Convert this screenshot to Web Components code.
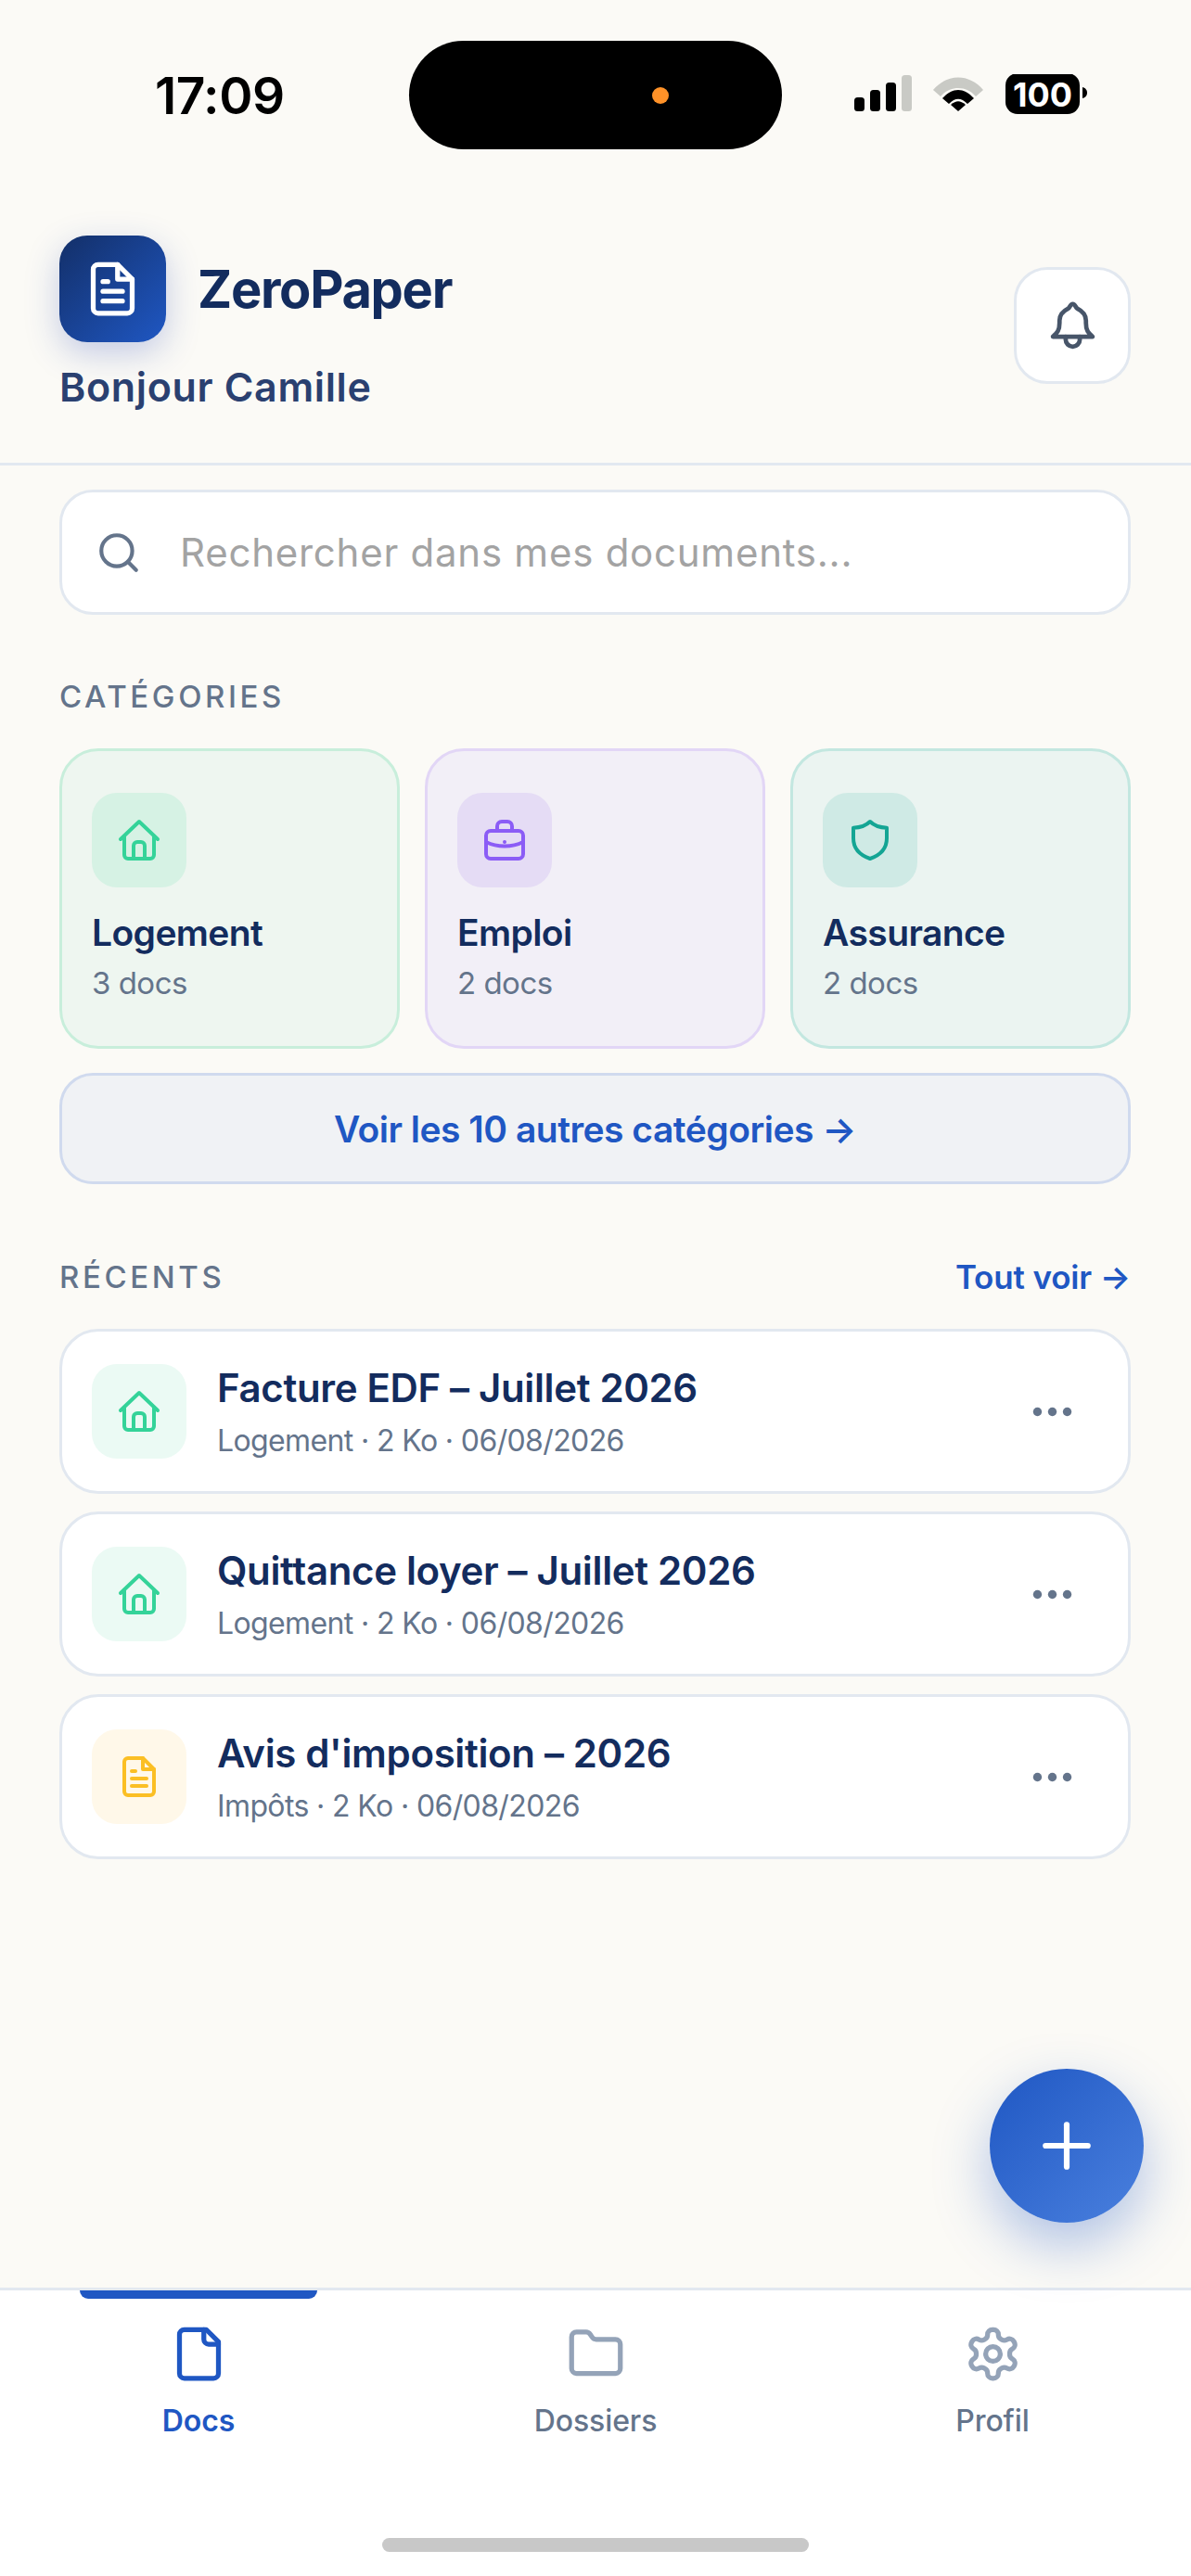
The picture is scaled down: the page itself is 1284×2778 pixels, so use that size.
<!DOCTYPE html>
<html lang="fr">
<head>
<meta charset="utf-8">
<title>ZeroPaper</title>
<style>
  html, body { margin: 0; padding: 0; background: #fbfaf6; }
  body { font-family: Inter, "Liberation Sans", sans-serif; }
</style>
</head>
<body>
<zp-app>
  <zp-status-bar slot="status" time="17:09" battery="100"></zp-status-bar>
  <zp-header slot="header" title="ZeroPaper" greeting="Bonjour Camille"></zp-header>
  <zp-search placeholder="Rechercher dans mes documents..."></zp-search>
  <zp-section label="CATÉGORIES" style="margin-top:68px;margin-bottom:36px"></zp-section>
  <zp-category-grid>
    <zp-category name="Logement" count="3 docs" icon="home" tone="green"></zp-category>
    <zp-category name="Emploi" count="2 docs" icon="briefcase" tone="purple"></zp-category>
    <zp-category name="Assurance" count="2 docs" icon="shield" tone="teal"></zp-category>
  </zp-category-grid>
  <zp-more-button label="Voir les 10 autres catégories →"></zp-more-button>
  <zp-section label="RÉCENTS" action="Tout voir →" style="margin-top:80px;margin-bottom:36px"></zp-section>
  <zp-doc-list>
    <zp-doc title="Facture EDF – Juillet 2026" meta="Logement · 2 Ko · 06/08/2026" icon="home" tone="green"></zp-doc>
    <zp-doc title="Quittance loyer – Juillet 2026" meta="Logement · 2 Ko · 06/08/2026" icon="home" tone="green"></zp-doc>
    <zp-doc title="Avis d'imposition – 2026" meta="Impôts · 2 Ko · 06/08/2026" icon="file-text" tone="yellow"></zp-doc>
  </zp-doc-list>
  <zp-fab slot="fab"></zp-fab>
  <zp-tab-bar slot="tabs">
    <zp-tab label="Docs" icon="file" active></zp-tab>
    <zp-tab label="Dossiers" icon="folder"></zp-tab>
    <zp-tab label="Profil" icon="settings"></zp-tab>
  </zp-tab-bar>
</zp-app>

<script>
(function () {
  // tracés des icônes, viewBox 24x24
  var ICONS = {
    'file-text': '<path d="M14 2H6a2 2 0 0 0-2 2v16a2 2 0 0 0 2 2h12a2 2 0 0 0 2-2V8z"/><path d="M14 2v6h6"/><path d="M16 13H8"/><path d="M16 17H8"/><path d="M10 9H8"/>',
    'file': '<path d="M15 2H6a2 2 0 0 0-2 2v16a2 2 0 0 0 2 2h12a2 2 0 0 0 2-2V7Z"/><path d="M14 2v4a2 2 0 0 0 2 2h4"/>',
    'folder': '<path d="M20 20a2 2 0 0 0 2-2V8a2 2 0 0 0-2-2h-7.9a2 2 0 0 1-1.69-.9L9.6 3.9A2 2 0 0 0 7.93 3H4a2 2 0 0 0-2 2v13a2 2 0 0 0 2 2Z"/>',
    'settings': '<path d="M12.22 2h-.44a2 2 0 0 0-2 2v.18a2 2 0 0 1-1 1.73l-.43.25a2 2 0 0 1-2 0l-.15-.08a2 2 0 0 0-2.73.73l-.22.38a2 2 0 0 0 .73 2.73l.15.1a2 2 0 0 1 1 1.72v.51a2 2 0 0 1-1 1.74l-.15.09a2 2 0 0 0-.73 2.73l.22.38a2 2 0 0 0 2.73.73l.15-.08a2 2 0 0 1 2 0l.43.25a2 2 0 0 1 1 1.73V20a2 2 0 0 0 2 2h.44a2 2 0 0 0 2-2v-.18a2 2 0 0 1 1-1.73l.43-.25a2 2 0 0 1 2 0l.15.08a2 2 0 0 0 2.73-.73l.22-.39a2 2 0 0 0-.73-2.73l-.15-.08a2 2 0 0 1-1-1.74v-.5a2 2 0 0 1 1-1.74l.15-.09a2 2 0 0 0 .73-2.73l-.22-.38a2 2 0 0 0-2.73-.73l-.15.08a2 2 0 0 1-2 0l-.43-.25a2 2 0 0 1-1-1.73V4a2 2 0 0 0-2-2z"/><circle cx="12" cy="12" r="3"/>',
    'bell': '<path d="M3 17.300C5 15.500 6 14.500 6 11V10C6 7 8 5.500 10 4.500C10.700 3.800 11 2.500 12 2.500C13 2.500 13.300 3.800 14 4.500C16 5.500 18 7 18 10V11C18 14.500 19 15.500 21 17.300Z"/><path d="M8.800 17.300v1.300a3.200 3.200 0 0 0 6.400 0v-1.300"/>',
    'search': '<circle cx="11" cy="11" r="8"/><path d="m21 21-4.300-4.300"/>',
    'home': '<path d="M2 11.500 12 2l10 9.500"/><path d="M4 10v10a2 2 0 0 0 2 2h12a2 2 0 0 0 2-2V10"/><path d="M9 22v-7a2 2 0 0 1 2-2h2a2 2 0 0 1 2 2v7"/>',
    'briefcase': '<rect x="2" y="7" width="20" height="15" rx="2.500"/><path d="M8 7V4.500A2.500 2.500 0 0 1 10.500 2h3A2.500 2.500 0 0 1 16 4.500V7"/><path d="M2 13c6 3 14 3 20 0"/><path d="M12 13h.01"/>',
    'shield': '<path d="M12 2c2 2 5 3.200 9 3.400V11c0 5.600-3.800 9.200-9 11-5.200-1.800-9-5.400-9-11V5.400C7 5.200 10 4 12 2z"/>',
    'dots': '<g fill="currentColor" stroke="none"><circle cx="5" cy="12" r="2.050"/><circle cx="12" cy="12" r="2.050"/><circle cx="19" cy="12" r="2.050"/></g>',
    'plus': '<path d="M5 12h14"/><path d="M12 5v14"/>'
  };

  var TONES = {
    green: { bg: '#eef6f0', line: '#c8eedb', chip: '#d6f2e4', soft: '#ebfaf4', ink: '#34d399' },
    purple: { bg: '#f2eff7', line: '#e2d6f6', chip: '#e5dcf5', soft: '#f3effd', ink: '#8b5cf6' },
    teal: { bg: '#ebf4f1', line: '#c3e7e0', chip: '#cfeae5', soft: '#e6f6f3', ink: '#14a594' },
    yellow: { bg: '#fff8e9', line: '#fdecc4', chip: '#fdf1d2', soft: '#fff8e9', ink: '#fbbf24' }
  };

  function esc(s) {
    return String(s === null || s === undefined ? '' : s)
      .replace(/&/g, '&amp;')
      .replace(/</g, '&lt;')
      .replace(/>/g, '&gt;')
      .replace(/"/g, '&quot;');
  }

  class Base extends HTMLElement {
    constructor() {
      super();
      this.attachShadow({ mode: 'open' });
    }
    connectedCallback() {
      this.shadowRoot.innerHTML = this.render();
    }
    attr(name) {
      return esc(this.getAttribute(name));
    }
  }

  class ZpIcon extends Base {
    render() {
      var size = this.getAttribute('size') || 48;
      var sw = this.getAttribute('stroke') || 2;
      return '<style>:host{display:block;line-height:0;width:' + size + 'px;height:' + size + 'px}</style>' +
        '<svg xmlns="http://www.w3.org/2000/svg" width="' + size + '" height="' + size + '" viewBox="0 0 24 24" fill="none" stroke="currentColor" stroke-width="' + sw + '" stroke-linecap="round" stroke-linejoin="round">' +
        (ICONS[this.getAttribute('name')] || '') + '</svg>';
    }
  }

  class ZpApp extends Base {
    render() {
      return '<style>' +
        ':host{display:flex;flex-direction:column;position:relative;width:1284px;height:2778px;overflow:hidden;background:#fbfaf6;color:#132c5e}' +
        'main{flex:1;display:flex;flex-direction:column;padding:26px 65px 0 64px;min-height:0}' +
        '</style>' +
        '<slot name="status"></slot><slot name="header"></slot>' +
        '<main><slot></slot></main>' +
        '<slot name="fab"></slot><slot name="tabs"></slot>';
    }
  }

  class ZpStatusBar extends Base {
    render() {
      return '<style>' +
        ':host{display:grid;grid-template-columns:441px 402px 441px;align-items:center;height:205px;box-sizing:border-box;padding-top:44px;padding-bottom:44px}' +
        '.time{font:600 55px Inter,"Liberation Sans",sans-serif;color:#000;padding-left:167px;letter-spacing:-.5px}' +
        '.island{height:117px;background:#000;border-radius:59px;display:flex;align-items:center;justify-content:flex-end;padding-right:122px;box-sizing:border-box}' +
        '.dot{width:18px;height:18px;border-radius:50%;background:#ff9228}' +
        '.sys{display:flex;justify-content:flex-start;padding-left:78px}' +
        '</style>' +
        '<div class="time">' + this.attr('time') + '</div>' +
        '<div class="island"><span class="dot"></span></div>' +
        '<div class="sys"><svg xmlns="http://www.w3.org/2000/svg" width="255" height="46" viewBox="0 0 255 46">' +
        '<rect x="0" y="25" width="11" height="15" rx="3.500"/><rect x="17" y="17" width="11" height="23" rx="3.500"/><rect x="34" y="9" width="11" height="31" rx="3.500"/>' +
        '<rect x="51" y="1" width="11" height="39" rx="3.500" fill="#c9cac5"/>' +
        '<path d="M85 17C100 -1 124 -1 139 17L131 24C121 12 103 12 93 24Z" fill="#c9cac5"/>' +
        '<path d="M95 26C106 14 118 14 129 26L122 32C115 25 109 25 102 32Z"/>' +
        '<path d="M104 33C110 28 114 28 120 33L112 40Z"/>' +
        '<rect x="163" y="-1" width="80" height="44" rx="13"/>' +
        '<path d="M246 14C250 15 251 18 251 20C251 22 250 25 246 26Z"/>' +
        '<text x="203" y="35" text-anchor="middle" font-family="Inter,Liberation Sans,sans-serif" font-size="36" font-weight="700" fill="#fff">' + this.attr('battery') + '</text>' +
        '</svg></div>';
    }
  }

  class ZpHeader extends Base {
    render() {
      return '<style>' +
        ':host{display:flex;align-items:center;justify-content:space-between;padding:49px 65px 52px 64px;border-bottom:3px solid #e2e8f0}' +
        '.left{display:flex;flex-direction:column;gap:19px}' +
        '.brand{display:flex;align-items:center;gap:34px}' +
        '.logo{width:115px;height:115px;border-radius:30px;background:linear-gradient(135deg,#132f68,#1f57c3);color:#fff;display:flex;align-items:center;justify-content:center;box-shadow:0 12px 36px rgba(30,64,175,.25)}' +
        'h1{margin:0;font-size:56px;font-weight:700;color:#132c5e;letter-spacing:-1.3px;line-height:64px}' +
        '.hello{font-size:43px;font-weight:600;color:#2a4070;line-height:59px;letter-spacing:.65px}' +
        '.bell{width:126px;height:126px;box-sizing:border-box;border:3px solid #e2e8f0;border-radius:36px;background:#fff;color:#475569;display:flex;align-items:center;justify-content:center}' +
        '</style>' +
        '<div class="left"><div class="brand"><div class="logo"><zp-icon name="file-text" size="63"></zp-icon></div><h1>' + this.attr('title') + '</h1></div>' +
        '<div class="hello">' + this.attr('greeting') + '</div></div>' +
        '<div class="bell"><zp-icon name="bell" size="57"></zp-icon></div>';
    }
  }

  class ZpSearch extends Base {
    render() {
      return '<style>' +
        ':host{display:flex;align-items:center;gap:41px;height:135px;box-sizing:border-box;padding:0 36px;background:#fff;border:3px solid #e2e8f0;border-radius:36px;color:#64748b}' +
        'span{font-size:42px;color:#a3a3a3;letter-spacing:.75px}' +
        '</style>' +
        '<zp-icon name="search" size="50"></zp-icon><span>' + this.attr('placeholder') + '</span>';
    }
  }

  class ZpSection extends Base {
    render() {
      var action = this.getAttribute('action');
      return '<style>' +
        ':host{display:flex;align-items:center;justify-content:space-between;height:40px}' +
        '.t{font-size:33px;font-weight:500;letter-spacing:3.6px;color:#64748b}' +
        '.a{font-size:35px;font-weight:600;color:#1f57c3;letter-spacing:-.15px}' +
        '</style>' +
        '<span class="t">' + this.attr('label') + '</span>' +
        (action ? '<span class="a">' + esc(action) + '</span>' : '');
    }
  }

  class ZpCategoryGrid extends Base {
    render() {
      return '<style>:host{display:grid;grid-template-columns:repeat(3,1fr);gap:27px}</style><slot></slot>';
    }
  }

  class ZpCategory extends Base {
    render() {
      var t = TONES[this.getAttribute('tone')] || TONES.green;
      return '<style>' +
        ':host{display:block;height:324px;box-sizing:border-box;padding:45px 32px;border:3px solid ' + t.line + ';background:' + t.bg + ';border-radius:42px}' +
        '.chip{width:102px;height:102px;border-radius:27px;background:' + t.chip + ';color:' + t.ink + ';display:flex;align-items:center;justify-content:center}' +
        '.n{margin-top:22px;font-size:39px;font-weight:600;line-height:54px;color:#132c5e;letter-spacing:-.6px}' +
        '.c{margin-top:5px;font-size:33px;line-height:44px;color:#64748b;letter-spacing:-.5px}' +
        '</style>' +
        '<div class="chip"><zp-icon name="' + this.attr('icon') + '" size="48"></zp-icon></div>' +
        '<div class="n">' + this.attr('name') + '</div><div class="c">' + this.attr('count') + '</div>';
    }
  }

  class ZpMoreButton extends Base {
    render() {
      return '<style>' +
        ':host{display:flex;align-items:center;justify-content:center;height:120px;box-sizing:border-box;margin-top:26px;background:#f0f2f5;border:3px solid #d0daee;border-radius:36px;font-size:39px;font-weight:600;color:#1f57c3;letter-spacing:-.5px}' +
        '</style>' + this.attr('label');
    }
  }

  class ZpDocList extends Base {
    render() {
      return '<style>:host{display:flex;flex-direction:column;gap:19px}</style><slot></slot>';
    }
  }

  class ZpDoc extends Base {
    render() {
      var t = TONES[this.getAttribute('tone')] || TONES.green;
      return '<style>' +
        ':host{display:flex;align-items:center;height:178px;box-sizing:border-box;padding:0 32px;background:#fff;border:3px solid #e2e8f0;border-radius:42px}' +
        '.chip{flex:none;width:102px;height:102px;border-radius:27px;background:' + t.soft + ';color:' + t.ink + ';display:flex;align-items:center;justify-content:center}' +
        '.txt{flex:1;min-width:0;padding-left:33px}' +
        '.ti{font-size:42px;font-weight:600;line-height:58px;color:#132c5e;letter-spacing:-.35px;position:relative;top:-1px}' +
        '.me{margin-top:5px;font-size:32px;line-height:44px;color:#64748b;letter-spacing:-.62px}' +
        '.more{flex:none;color:#64748b;margin-right:22px}' +
        '</style>' +
        '<div class="chip"><zp-icon name="' + this.attr('icon') + '" size="48"></zp-icon></div>' +
        '<div class="txt"><div class="ti">' + this.attr('title') + '</div><div class="me">' + this.attr('meta') + '</div></div>' +
        '<zp-icon class="more" name="dots" size="55"></zp-icon>';
    }
  }

  class ZpFab extends Base {
    render() {
      return '<style>' +
        ':host{position:absolute;right:51px;bottom:381px;z-index:2;width:166px;height:166px;border-radius:50%;background:linear-gradient(135deg,#1f57c3,#4a80de);color:#fff;display:flex;align-items:center;justify-content:center;box-shadow:0 24px 60px rgba(31,87,195,.35)}' +
        '</style><zp-icon name="plus" size="78" stroke="1.900"></zp-icon>';
    }
  }

  class ZpTabBar extends Base {
    render() {
      return '<style>' +
        ':host{display:grid;grid-template-columns:repeat(3,1fr);height:311px;box-sizing:border-box;background:#fff;border-top:3px solid #e2e8f0;position:relative}' +
        '.home{position:absolute;left:412px;top:267px;width:460px;height:15px;border-radius:8px;background:#c8c8c8}' +
        '</style><slot></slot><div class="home"></div>';
    }
  }

  class ZpTab extends Base {
    render() {
      var on = this.hasAttribute('active');
      return '<style>' +
        ':host{display:flex;flex-direction:column;align-items:center;position:relative;padding-top:37px}' +
        '.bar{position:absolute;top:0;left:20%;width:60%;height:9px;background:#1f57c3;border-radius:0 0 9px 9px}' +
        '.ic{color:' + (on ? '#1f57c3' : '#94a3b8') + '}' +
        '.l{margin-top:20px;font-size:32px;line-height:42px;letter-spacing:-.1px;font-weight:' + (on ? 600 : 500) + ';color:' + (on ? '#1f57c3' : '#64748b') + '}' +
        '</style>' +
        (on ? '<div class="bar"></div>' : '') +
        '<zp-icon class="ic" name="' + this.attr('icon') + '" size="63"></zp-icon><div class="l">' + this.attr('label') + '</div>';
    }
  }

  customElements.define('zp-icon', ZpIcon);
  customElements.define('zp-app', ZpApp);
  customElements.define('zp-status-bar', ZpStatusBar);
  customElements.define('zp-header', ZpHeader);
  customElements.define('zp-search', ZpSearch);
  customElements.define('zp-section', ZpSection);
  customElements.define('zp-category-grid', ZpCategoryGrid);
  customElements.define('zp-category', ZpCategory);
  customElements.define('zp-more-button', ZpMoreButton);
  customElements.define('zp-doc-list', ZpDocList);
  customElements.define('zp-doc', ZpDoc);
  customElements.define('zp-fab', ZpFab);
  customElements.define('zp-tab-bar', ZpTabBar);
  customElements.define('zp-tab', ZpTab);
})();
</script>
</body>
</html>
